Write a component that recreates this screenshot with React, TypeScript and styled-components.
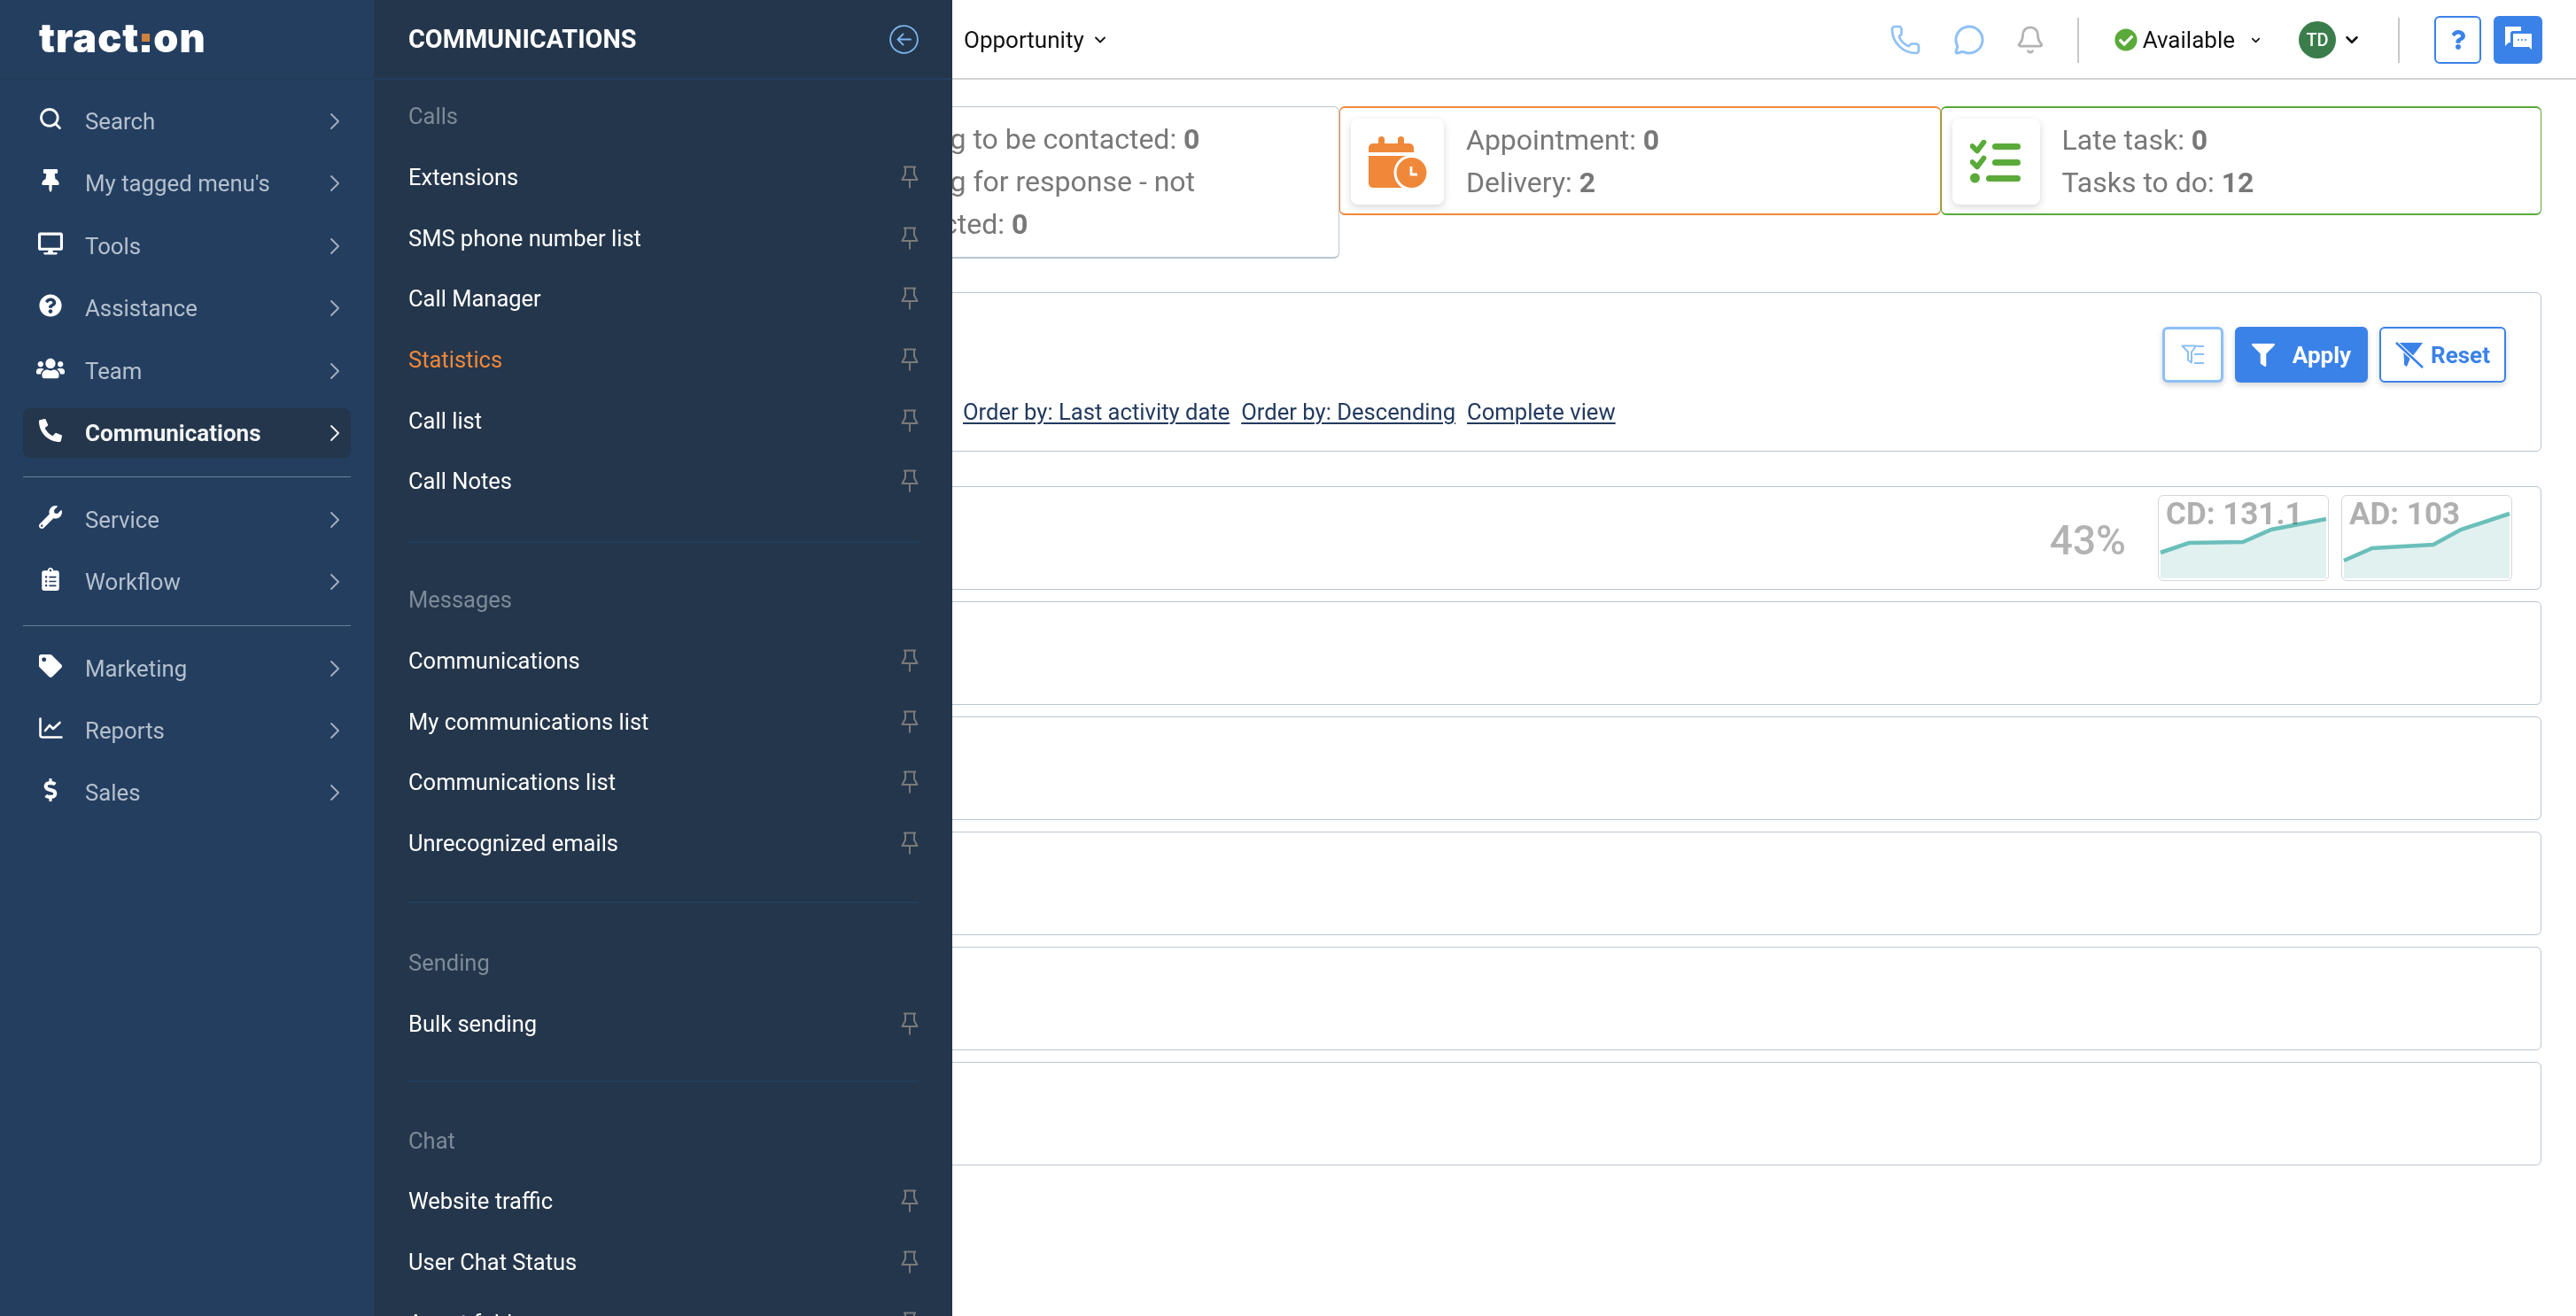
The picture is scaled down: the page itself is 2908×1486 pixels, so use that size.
import React from "react";
import styled, { createGlobalStyle } from "styled-components";
import {
  FaThumbtack, FaDesktop, FaQuestionCircle, FaUsers, FaPhoneAlt, FaWrench,
  FaClipboardList, FaTag, FaDollarSign, FaCheckCircle, FaFilter, FaQuestion,
} from "react-icons/fa";
import { Search, ChevronRight, ChevronDown, Phone, MessageCircle, Bell } from "lucide-react";

const Global = createGlobalStyle`
  html, body { margin: 0; padding: 0; background: #fff; }
  body { font-family: Roboto, "Liberation Sans", sans-serif; }
  * { box-sizing: border-box; }
`;

const Shell = styled.div`
  position: relative; display: flex; width: 2908px; height: 1486px; overflow: hidden; background: #fff;
`;
const Sidebar = styled.aside`
  width: 422px; flex: none; background: #243e60; display: flex; flex-direction: column;
`;
const LogoBar = styled.div`
  height: 90px; border-bottom: 2px solid #223a59; padding: 0 0 0 44px; display: flex; align-items: center;
`;
const Logo = styled.div`
  display: flex; align-items: flex-end; height: 32px; color: #fff; font-family: Inter, Roboto, sans-serif;
  font-weight: 900; font-size: 45px; line-height: 32px; letter-spacing: 1px; margin-top: -2px;
`;
const LogoI = styled.span`
  display: inline-flex; flex-direction: column; justify-content: flex-end; width: 9px; height: 30px; margin: 0 4px 0 3px; gap: 4px;
  &::before { content: ""; height: 9px; background: #d0813c; }
  &::after { content: ""; height: 8px; background: #fff; }
`;
const NavGroup = styled.nav`
  display: flex; flex-direction: column; gap: ${p => p.$gap}px; padding: ${p => p.$top}px 26px ${p => p.$bottom}px;
`;
const NavRule = styled.hr`
  margin: 0 26px; border: 0; height: 1px; background: #66809c;
`;
const NavRow = styled.div`
  display: flex; align-items: center; height: 56px; padding: 0 2.5px 0 0; border-radius: 8px;
  background: ${p => (p.$active ? "#24364b" : "transparent")};
  color: ${p => (p.$active ? "#f2f4f6" : "#b4c0cd")};
  font-size: ${p => (p.$active ? 26 : 25.8)}px; font-weight: ${p => (p.$active ? 700 : 400)};
`;
const NavIcon = styled.span`
  width: 62px; flex: none; display: flex; justify-content: center; color: #fff; margin-right: 8px; margin-top: -6px;
`;
const NavLabel = styled.span`
  flex: 1; white-space: nowrap;
`;
const NavChevron = styled(ChevronRight)`
  color: ${p => (p.$active ? "#f2f4f6" : "#a2b0bf")};
`;

const Flyout = styled.div`
  position: absolute; left: 422px; top: 0; bottom: 0; width: 653px; background: #24364b; overflow: hidden; z-index: 3;
`;
const FlyHead = styled.div`
  height: 90px; display: flex; align-items: center; justify-content: space-between;
  padding: 0 38px 0 39px; border-bottom: 2px solid #243e60;
`;
const FlyTitle = styled.div`
  color: #fff; font-size: 28.8px; font-weight: 700; white-space: nowrap;
`;
const Section = styled.section`
  padding: ${p => p.$top}px 38px ${p => p.$bottom}px 39px;
`;
const SectionRule = styled.hr`
  margin: 0 38px 0 39px; border: 0; height: 2px; background: #243e5c;
`;
const SectionLabel = styled.div`
  height: 69px; display: flex; align-items: center; color: #7d8a99; font-size: 25.5px;
`;
const Item = styled.div`
  height: 68.7px; display: flex; align-items: center; justify-content: space-between;
  color: ${p => (p.$active ? "#f0883a" : "#fff")}; font-size: 25.5px; white-space: nowrap;
`;

const Main = styled.main`
  flex: 1; min-width: 0; display: flex; flex-direction: column;
`;
const TopBar = styled.header`
  height: 90px; flex: none; border-bottom: 2px solid #d4d4d4; display: flex; align-items: center;
  padding: 2px 38px 0 666px; color: #111; font-size: 26px;
`;
const TopMenu = styled.div`
  display: flex; align-items: center; gap: 8px; white-space: nowrap; color: #111;
`;
const TopRight = styled.div`
  margin-left: auto; display: flex; align-items: center;
`;
const TopIcon = styled.span`
  display: flex; margin-left: ${p => p.$ml || 0}px; color: ${p => p.$color};
`;
const VRule = styled.span`
  width: 2px; height: 51px; background: #c8c8c8; margin: 0 ${p => p.$right}px 0 ${p => p.$left}px;
`;
const Status = styled.div`
  display: flex; align-items: center; white-space: nowrap; color: #111; font-size: 26px;
`;
const StatusDot = styled(FaCheckCircle)`
  color: #5aaa3a; margin-right: 6px;
`;
const Avatar = styled.span`
  width: 42px; height: 42px; border-radius: 50%; background: #3a7d4a; color: #fff; font-size: 20px; font-weight: 500;
  display: flex; align-items: center; justify-content: center; margin-left: 41px;
`;
const HelpBtn = styled.button`
  width: 53px; height: 54px; padding: 0; background: #fff; border: 2px solid #3b82e8; border-radius: 6px; color: #3b82e8;
  display: flex; align-items: center; justify-content: center;
`;
const ChatBtn = styled.button`
  width: 55px; height: 54px; padding: 0; margin-left: 14px; background: #3b82e8; border: 0; border-radius: 6px;
  display: flex; align-items: center; justify-content: center;
`;

const Content = styled.div`
  flex: 1; padding: 30px 39px 0 20px; display: flex; flex-direction: column;
`;
const StatRow = styled.div`
  display: flex; justify-content: flex-end; align-items: flex-start;
`;
const StatCard = styled.div`
  width: 678.5px; height: ${p => p.$h}px; display: flex; padding: 12px; gap: 25px; border: 1px solid ${p => p.$c}; border-radius: 6px; background: #fff;
  border-width: ${p => (p.$c === "#b9c5d1" ? 1 : 2)}px 1px 2px;
`;
const StatIcon = styled.div`
  width: ${p => p.$w}px; height: 97px; flex: none; border-radius: 8px; background: #fff;
  box-shadow: 0 3px 8px rgba(0, 0, 0, .16); display: flex; align-items: center; justify-content: center;
`;
const StatText = styled.div`
  color: #787878; font-size: 32px; line-height: 48px; white-space: nowrap;
  b { font-weight: 700; }
`;
const FilterPanel = styled.div`
  height: 180px; margin-top: 38px; border: 1px solid #b9c5d1; border-radius: 6px; padding: 38px 39px 0 644px;
`;
const Actions = styled.div`
  display: flex; justify-content: flex-end; gap: 13px;
`;
const Btn = styled.button`
  height: 63px; width: ${p => p.$w}px; padding: 0; border-radius: 6px; display: flex; align-items: center; justify-content: center;
  gap: ${p => p.$gap || 0}px; font: 700 26px Roboto, sans-serif; white-space: nowrap;
  background: ${p => (p.$solid ? "#3b82e8" : "#fff")}; color: ${p => (p.$solid ? "#fff" : "#3b82e8")};
  border: ${p => (p.$light ? "3px solid #8cbff5" : p.$solid ? "0" : "2px solid #3b82e8")};
  box-shadow: 0 3px 6px rgba(0, 0, 0, .16);
`;
const Links = styled.div`
  display: flex; gap: 13px; margin-top: 17px; height: 32px; align-items: center;
`;
const OrderLink = styled.a`
  color: #223a5e; font-size: 25.6px; white-space: nowrap; text-decoration: underline; text-underline-offset: 3px;
  text-decoration-thickness: 2px;
`;
const Rows = styled.div`
  display: flex; flex-direction: column; gap: 13px; margin-top: 39px;
`;
const Row = styled.div`
  height: 117px; border: 1px solid #b9c5d1; border-radius: 6px; display: flex; align-items: center; justify-content: flex-end;
  padding-right: 32px;
`;
const Percent = styled.div`
  color: #b3b3b3; font-size: 46px; font-weight: 500; margin-right: 36px; margin-top: 4px;
`;
const Spark = styled.div`
  position: relative; width: 193px; height: 97px; border: 1px solid #d6d6d6; border-radius: 6px; margin-left: ${p => p.$ml || 0}px; overflow: hidden;
  svg { display: block; }
`;
const SparkLabel = styled.div`
  position: absolute; left: 8px; top: 0; color: #b0b0b0; font-size: 35px; font-weight: 700; line-height: 42px; white-space: nowrap;
  mix-blend-mode: multiply;
`;

const Pin = () => (
  <svg width="20" height="26" viewBox="0 0 20 26" fill="none" stroke="#7a7a7a" strokeWidth="2">
    <path d="M3 1.5h14M5 1.5v8L1.5 16h17L15 9.5v-8M10 16v9.5" strokeLinejoin="round" />
  </svg>
);
const BackCircle = () => (
  <svg width="33" height="33" viewBox="0 0 33 33" fill="none" stroke="#7ab5ef" strokeWidth="1.8" strokeLinecap="round" strokeLinejoin="round">
    <circle cx="16.5" cy="16.5" r="15.4" />
    <path d="M24 16.5H9.5M15.5 10.5l-6 6 6 6" />
  </svg>
);
const CalendarClock = () => (
  <svg width="66" height="58" viewBox="20 26 66 58">
    <path fill="#f0883a" d="M31 34v-4.500a3.500 3.500 0 0 1 7 0V34h15v-4.500a3.500 3.500 0 0 1 7 0V34h6a5 5 0 0 1 5 5v5H20v-5a5 5 0 0 1 5-5z" />
    <path fill="#f0883a" d="M20 48h51v36H25a5 5 0 0 1-5-5z" />
    <circle cx="68.500" cy="67" r="20" fill="#fff" />
    <circle cx="68.500" cy="67" r="17" fill="#f0883a" />
    <path d="M68 60v9h7" fill="none" stroke="#fff" strokeWidth="2.800" />
  </svg>
);
const Tasks = () => (
  <svg width="58" height="49" viewBox="25 30 58 49" fill="#5aaa3a">
    <path d="M27.500 37l5.500 5.500 7.500-10M27.500 55l5.500 5.500 7.500-10" fill="none" stroke="#5aaa3a" strokeWidth="5.800" strokeLinecap="round" strokeLinejoin="round" />
    <circle cx="30.500" cy="73" r="5.500" />
    <rect x="50" y="34" width="32" height="7" rx="3.500" />
    <rect x="50" y="52" width="32" height="7" rx="3.500" />
    <rect x="43" y="70" width="39" height="7" rx="3.500" />
  </svg>
);
const Bubbles = () => (
  <svg width="32" height="32" viewBox="0 0 32 32" fill="#fff">
    <path d="M1 1h17a1 1 0 0 1 1 1v4h-9a3 3 0 0 0-3 3v10H5l-4 4z" />
    <path d="M11 9h19a1 1 0 0 1 1 1v17l-3-3H11a1 1 0 0 1-1-1V10a1 1 0 0 1 1-1z" />
    <circle cx="16" cy="16" r="1" fill="#3b82e8" /><circle cx="20" cy="16" r="1" fill="#3b82e8" /><circle cx="24" cy="16" r="1" fill="#3b82e8" />
  </svg>
);
const FilterList = () => (
  <svg width="27" height="24" viewBox="0 0 27 24" fill="none" stroke="#8cbff5" strokeWidth="2">
    <path d="M1.500 1.500H17l-5 7v12l-4-3v-9z" strokeLinejoin="round" />
    <path d="M18 2h8M15 11h11M15 21h11" />
  </svg>
);
const FilterSlash = () => (
  <svg width="34" height="30" viewBox="0 0 34 30">
    <path fill="#3b82e8" d="M3 1h28l-9 12-4 5zM9 10l8 8-4 10-3-2v-6z" />
    <path d="M1 1l30 28" stroke="#fff" strokeWidth="5" />
    <path d="M1 1l30 28" stroke="#3b82e8" strokeWidth="2.500" />
  </svg>
);
const ChartLine = () => (
  <svg width="27" height="24" viewBox="0 0 27 24" fill="none" stroke="#fff" strokeWidth="2.6" strokeLinecap="round" strokeLinejoin="round">
    <path d="M1.500 1.500V20a2.500 2.500 0 0 0 2.500 2.500h21.500" />
    <path d="M7 15l5-6 4 4 7.500-7" />
  </svg>
);
const Sparkline = ({ pts }: { pts: number[][] }) => {
  const line = pts.map(p => p.join(",")).join(" ");
  const area = `3,94 ${line} 190,94`;
  return (
    <svg width="191" height="95" viewBox="1 1 191 95">
      <polygon points={area} fill="#e1f1f0" />
      <polyline points={line} fill="none" stroke="#6bbfba" strokeWidth="4.500" />
    </svg>
  );
};

const I = { size: 26 };
type NavEntry = { label: string; icon: React.ReactNode; active?: boolean };
const nav1: NavEntry[] = [
  { label: "Search", icon: <Search size={28} strokeWidth={2.4} /> },
  { label: "My tagged menu's", icon: <FaThumbtack size={I.size} /> },
  { label: "Tools", icon: <FaDesktop size={28} /> },
  { label: "Assistance", icon: <FaQuestionCircle size={I.size} /> },
  { label: "Team", icon: <FaUsers size={32} /> },
  { label: "Communications", icon: <FaPhoneAlt size={I.size} />, active: true },
];
const nav2: NavEntry[] = [
  { label: "Service", icon: <FaWrench size={I.size} /> },
  { label: "Workflow", icon: <FaClipboardList size={I.size} /> },
];
const nav3: NavEntry[] = [
  { label: "Marketing", icon: <FaTag size={I.size} /> },
  { label: "Reports", icon: <ChartLine /> },
  { label: "Sales", icon: <FaDollarSign size={I.size} /> },
];

const NavList = ({ items, top, bottom, gap }: { items: NavEntry[]; top: number; bottom: number; gap: number }) => (
  <NavGroup $top={top} $bottom={bottom} $gap={gap}>
    {items.map(n => (
      <NavRow key={n.label} $active={n.active}>
        <NavIcon>{n.icon}</NavIcon>
        <NavLabel>{n.label}</NavLabel>
        <NavChevron $active={n.active} size={32} strokeWidth={1.4} />
      </NavRow>
    ))}
  </NavGroup>
);

const FlySection = ({ label, items, top, bottom, active }: { label: string; items: string[]; top: number; bottom: number; active?: string }) => (
  <Section $top={top} $bottom={bottom}>
    <SectionLabel>{label}</SectionLabel>
    {items.map(t => (
      <Item key={t} $active={t === active}>
        <span>{t}</span>
        <Pin />
      </Item>
    ))}
  </Section>
);

export default function App() {
  return (
    <Shell>
      <Global />
      <Sidebar>
        <LogoBar>
          <Logo>tract<LogoI />on</Logo>
        </LogoBar>
        <NavList items={nav1} top={19} bottom={21} gap={14.4} />
        <NavRule />
        <NavList items={nav2} top={20} bottom={21} gap={14} />
        <NavRule />
        <NavList items={nav3} top={20} bottom={0} gap={14} />
      </Sidebar>

      <Flyout>
        <FlyHead>
          <FlyTitle>COMMUNICATIONS</FlyTitle>
          <BackCircle />
        </FlyHead>
        <FlySection label="Calls" top={6.5} bottom={33} active="Statistics"
          items={["Extensions", "SMS phone number list", "Call Manager", "Statistics", "Call list", "Call Notes"]} />
        <SectionRule />
        <FlySection label="Messages" top={30} bottom={32}
          items={["Communications", "My communications list", "Communications list", "Unrecognized emails"]} />
        <SectionRule />
        <FlySection label="Sending" top={32} bottom={30} items={["Bulk sending"]} />
        <SectionRule />
        <FlySection label="Chat" top={31} bottom={0} items={["Website traffic", "User Chat Status", "Agent folder"]} />
      </Flyout>

      <Main>
        <TopBar>
          <TopMenu>Opportunity <ChevronDown size={20} strokeWidth={2.2} /></TopMenu>
          <TopRight>
            <TopIcon $color="#8fc1f5"><Phone size={36} strokeWidth={1.8} /></TopIcon>
            <TopIcon $color="#8fc1f5" $ml={36}><MessageCircle size={36} strokeWidth={2} /></TopIcon>
            <TopIcon $color="#b3b3b3" $ml={34}><Bell size={34} strokeWidth={2} /></TopIcon>
            <VRule $left={36} $right={40} />
            <Status>
              <StatusDot size={26} />
              Available
              <ChevronDown size={15} strokeWidth={2.6} style={{ marginLeft: 16 }} />
            </Status>
            <Avatar>TD</Avatar>
            <ChevronDown size={22} strokeWidth={2.8} color="#111" style={{ marginLeft: 7 }} />
            <VRule $left={41} $right={39} />
            <HelpBtn><FaQuestion size={22} /></HelpBtn>
            <ChatBtn><Bubbles /></ChatBtn>
          </TopRight>
        </TopBar>

        <Content>
          <StatRow>
            <StatCard $c="#b9c5d1" $h={172}>
              <StatIcon $w={112} />
              <StatText>
                Waiting to be contacted: <b>0</b><br />
                Waiting for response - not<br />
                contacted: <b>0</b>
              </StatText>
            </StatCard>
            <StatCard $c="#f0883a" $h={123}>
              <StatIcon $w={105}><CalendarClock /></StatIcon>
              <StatText>Appointment: <b>0</b><br />Delivery: <b>2</b></StatText>
            </StatCard>
            <StatCard $c="#5aaa3a" $h={123}>
              <StatIcon $w={99}><Tasks /></StatIcon>
              <StatText>Late task: <b>0</b><br />Tasks to do: <b>12</b></StatText>
            </StatCard>
          </StatRow>

          <FilterPanel>
            <Actions>
              <Btn $w={69} $light><FilterList /></Btn>
              <Btn $w={150} $solid $gap={20}><FaFilter size={26} />Apply</Btn>
              <Btn $w={143} $gap={6}><FilterSlash />Reset</Btn>
            </Actions>
            <Links>
              <OrderLink>Order by: Last activity date</OrderLink>
              <OrderLink>Order by: Descending</OrderLink>
              <OrderLink>Complete view</OrderLink>
            </Links>
          </FilterPanel>

          <Rows>
            <Row>
              <Percent>43%</Percent>
              <Spark>
                <Sparkline pts={[[3, 65], [35, 54], [96, 53], [128, 39], [190, 27]]} />
                <SparkLabel>CD: 131.1</SparkLabel>
              </Spark>
              <Spark $ml={14}>
                <Sparkline pts={[[3, 74], [35, 60], [104, 56], [135, 39], [190, 21]]} />
                <SparkLabel>AD: 103</SparkLabel>
              </Spark>
            </Row>
            <Row /><Row /><Row /><Row /><Row />
          </Rows>
        </Content>
      </Main>
    </Shell>
  );
}
